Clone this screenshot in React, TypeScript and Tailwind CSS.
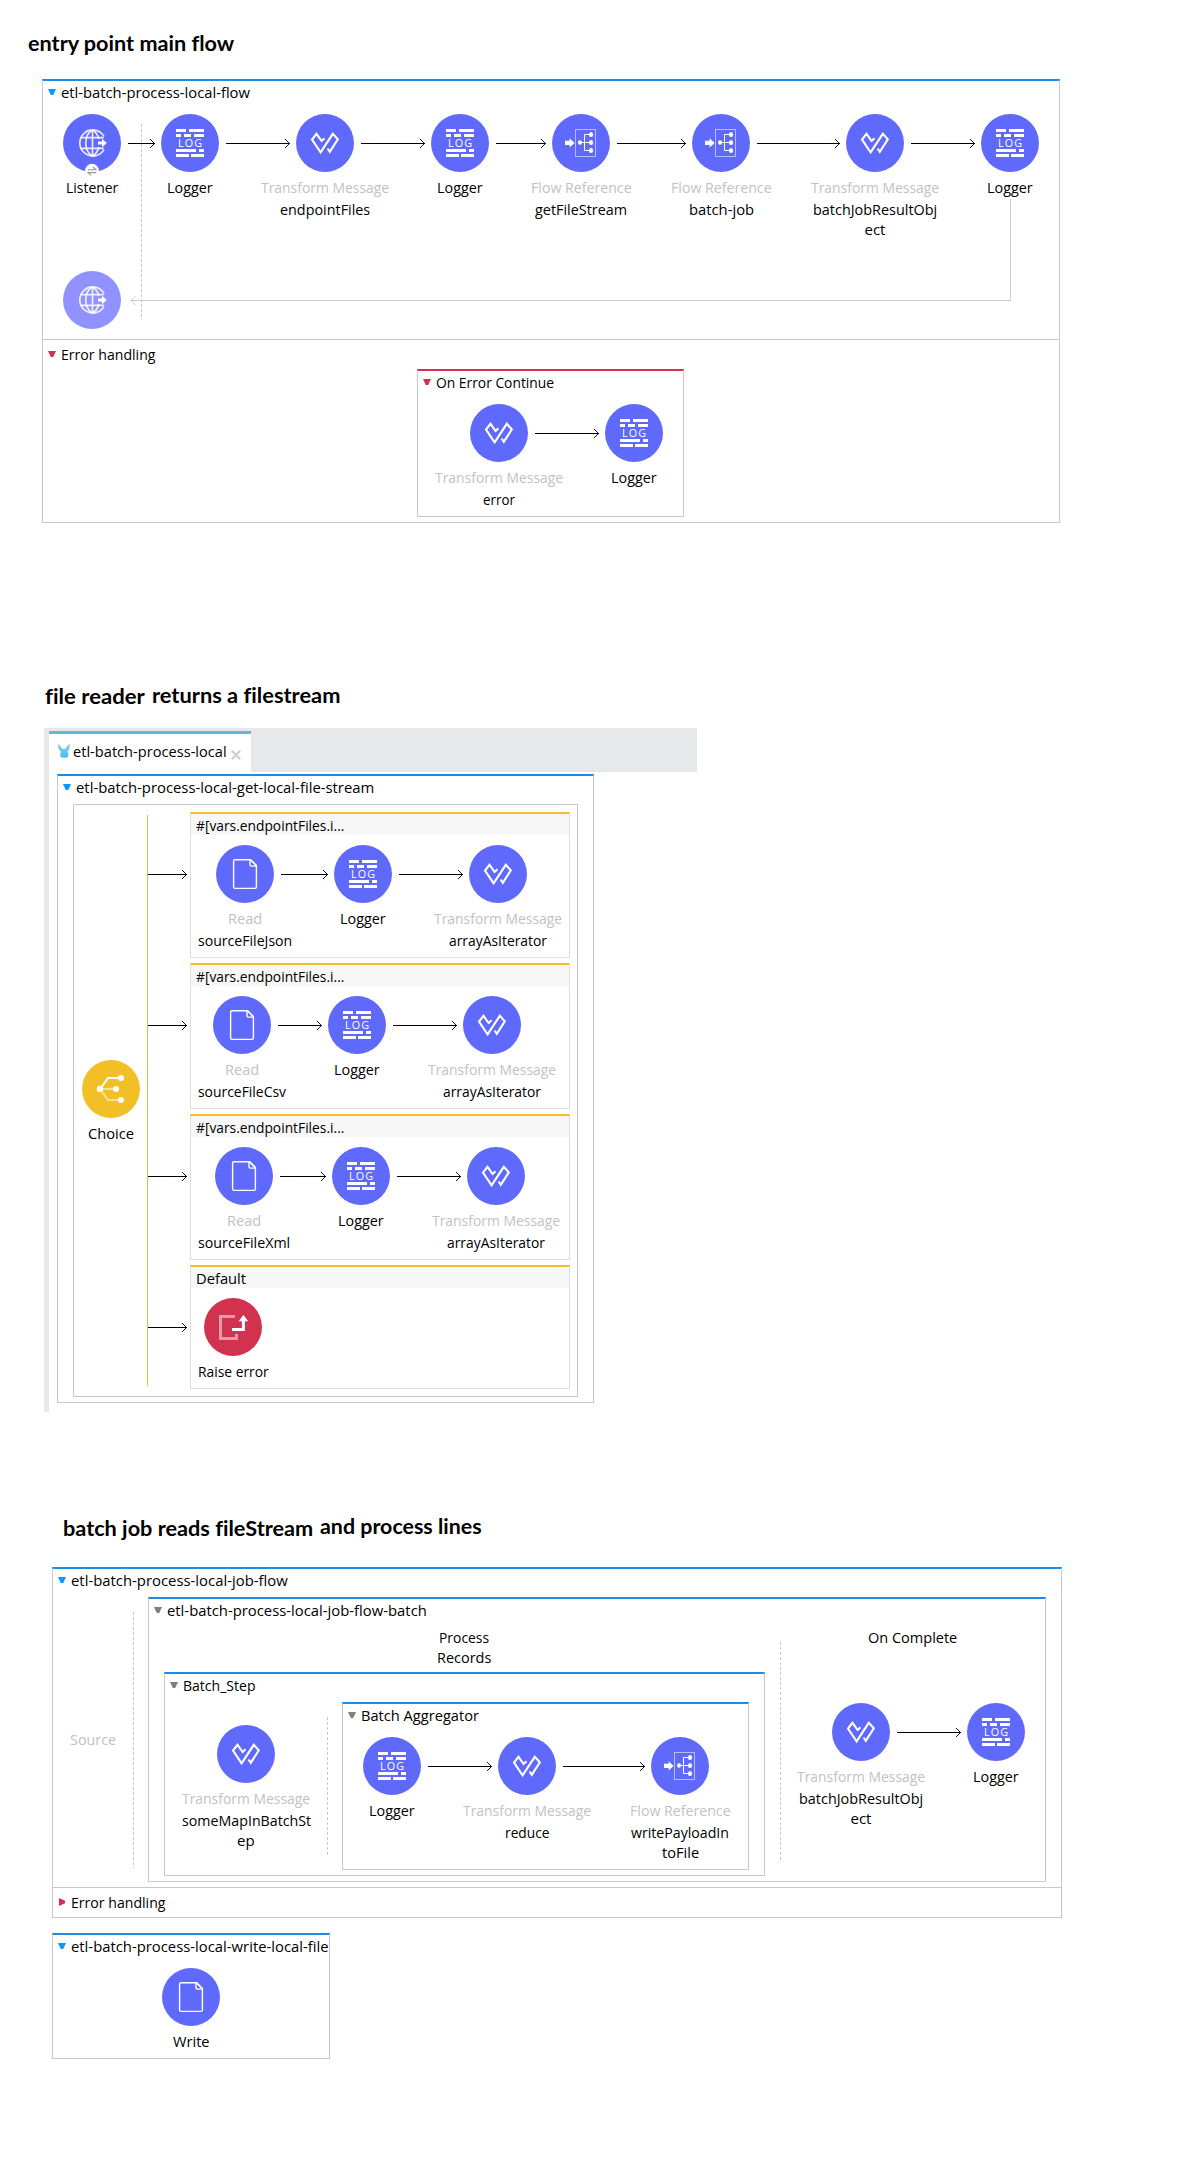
import { useLayoutEffect, useRef, useState, type ReactNode } from "react";

type IconKind = "listener" | "logger" | "transform" | "flowref" | "file" | "choice" | "raise";

/** Single line of text condensed or stretched horizontally to a given width. */
function Fit({ w, children, className = "" }: { w: number; children: string; className?: string }) {
  const ref = useRef<HTMLSpanElement>(null);
  const [scale, setScale] = useState(1);
  useLayoutEffect(() => {
    if (ref.current) setScale(w / ref.current.offsetWidth);
  }, [w, children]);
  return (
    <span className={`block shrink-0 whitespace-nowrap ${className}`} style={{ width: w }}>
      <span ref={ref} className="inline-block origin-left" style={{ transform: `scaleX(${scale})` }}>
        {children}
      </span>
    </span>
  );
}

function Glyph({ kind }: { kind: IconKind }) {
  switch (kind) {
    case "logger":
      return (
        <g fill="#fff">
          <path d="M15 15h10v3H15zM28 15h15v3H28zM15 20h5v3h-5zM23 20h7v3h-7zM33 20h10v3H33zM15 35h20v3H15zM38 35h5v3h-5zM15 40h13v3H15zM30 40h13v3H30z" />
          <text x="17" y="33" fontSize="10.8" fontFamily="'Open Sans', sans-serif" textLength="24" lengthAdjust="spacing">
            LOG
          </text>
        </g>
      );
    case "transform":
      return (
        <path
          d="M28.5 24.2 25.6 27 20.5 19.8 16 25.6 24.6 38.4 36.8 19.8 41.8 25.400 33.800 37.800 31.600 34.500"
          fill="none"
          stroke="#fff"
          strokeWidth="2.1"
        />
      );
    case "flowref":
      return (
        <g fill="#fff">
          <path d="M13 26.8h4.6v-2.6l5 4.7-5 4.7v-2.6H13z" />
          <rect x="23.5" y="15.5" width="20" height="27" fill="none" stroke="#fff" strokeOpacity=".55" />
          <path d="M28 28.5h11M39 20.5h-6.5v16H39" fill="none" stroke="#fff" />
          <ellipse cx="28" cy="28.5" rx="2" ry="2.2" />
          <ellipse cx="39" cy="20.5" rx="2.1" ry="2.5" />
          <ellipse cx="39" cy="28.5" rx="2.1" ry="2.5" />
          <ellipse cx="39" cy="36.5" rx="2.1" ry="2.5" />
        </g>
      );
    case "file":
      return (
        <g fill="none" stroke="#fff" strokeWidth="1.4">
          <path d="M19 14.7h15.6l5.8 5.8V42a1.4 1.4 0 0 1-1.4 1.4H19A1.4 1.4 0 0 1 17.6 42V16.1a1.4 1.4 0 0 1 1.4-1.4z" />
          <path d="M34 14.8v5a1.3 1.3 0 0 0 1.3 1.3h5M34.4 14.8l6 6" />
        </g>
      );
    case "listener":
      return (
        <g>
          <g fill="none" stroke="#fff" strokeWidth="1.7" strokeOpacity=".85">
            <path d="M41 22.4A13 13 0 1 0 41 35.6" />
            <path d="M29.5 16v26M18.2 23.7h22.6M18.2 34.3h22.6" />
            <path d="M29.5 16c-9 5-9 21 0 26M29.5 16c3.6 2.2 5.6 5.4 6.3 9M29.5 42c3.6-2.2 5.600-5.400 6.300-9" />
          </g>
          <path d="M35 27.500h4v-2.800l4.800 4.300-4.800 4.300v-2.800h-4z" fill="#fff" />
        </g>
      );
    case "choice":
      return (
        <g>
          <path d="M20 26.5 26 18h12" fill="none" stroke="#fff" strokeWidth="2" />
          <path d="M20 31.5 26 40h12M20 29h13" fill="none" stroke="#fff" strokeWidth="2" strokeOpacity=".55" />
          <g fill="#fff">
            <circle cx="18" cy="29" r="3.3" />
            <circle cx="39" cy="18" r="3" />
            <circle cx="34" cy="29" r="3" />
            <circle cx="39" cy="40" r="3" />
          </g>
        </g>
      );
    case "raise":
      return (
        <g>
          <path d="M31 18.5H16.5v22h16V36" fill="none" stroke="#fff" strokeOpacity=".5" strokeWidth="3" />
          <path d="M28 31.4h11.4V22" fill="none" stroke="#fff" strokeWidth="3" />
          <path d="M39.4 17l4.8 6.2h-9.6z" fill="#fff" />
        </g>
      );
  }
}

type Line = [string, number];

function Node({
  kind,
  fill = "#5f69fb",
  type,
  name = [],
  children,
}: {
  kind: IconKind;
  fill?: string;
  type?: Line;
  name?: Line[];
  children?: ReactNode;
}) {
  return (
    <div className="relative flex w-[58px] shrink-0 flex-col items-center leading-5">
      <svg width="58" height="58" viewBox="0 0 58 58" className="shrink-0">
        <circle cx="29" cy="29" r="29" fill={fill} />
        <Glyph kind={kind} />
      </svg>
      {children}
      <div className="mt-[5px] flex flex-col items-center">
        {type && (
          <Fit w={type[1]} className="mb-0.5 text-[#c2c2c2]">
            {type[0]}
          </Fit>
        )}
        {name.map(([t, w]) => (
          <Fit key={t} w={w}>
            {t}
          </Fit>
        ))}
      </div>
    </div>
  );
}

/** Connector: a 1px line that fills its box, ending in an open head. */
function Arrow({ className }: { className: string }) {
  return (
    <div className={`flex h-[13px] shrink-0 items-center ${className}`}>
      <div className="h-px grow bg-black" />
      <svg width="6" height="13" viewBox="0 0 6 13" className="-ml-1.5 shrink-0">
        <path d="M1 2 5.5 6.5 1 11" fill="none" stroke="#000" strokeWidth=".9" />
      </svg>
    </div>
  );
}

function Link({ w }: { w: string }) {
  return (
    <div className={`flex shrink-0 pt-[23px] pr-1.5 pl-[7px] ${w}`}>
      <Arrow className="grow" />
    </div>
  );
}

const Logger = () => <Node kind="logger" name={[["Logger", 46]]} />;
const Transform = ({ name }: { name: Line[] }) => <Node kind="transform" type={["Transform Message", 128]} name={name} />;
const FlowRef = ({ name }: { name: Line[] }) => <Node kind="flowref" type={["Flow Reference", 101]} name={name} />;

function Title({ text, w, color, className = "h-[33px] pt-px" }: { text: string; w: number; color: string; className?: string }) {
  return (
    <div className={`flex shrink-0 pl-[5px] leading-5 ${className}`}>
      <svg width="8" height="6" viewBox="0 0 8 6" className="mt-[7px] mr-[5px] shrink-0">
        <path d="M0 0h8L5.2 6H2.8z" fill={color} />
      </svg>
      <Fit w={w}>{text}</Fit>
    </div>
  );
}

const BOX = "flex shrink-0 flex-col border border-t-2 border-[#c9c9c9]";
const DASH = "w-px shrink-0 bg-[repeating-linear-gradient(to_bottom,#c9c9c9_0_3px,transparent_3px_5px)]";
const BLUE = "#0a97ff";
const RED = "#d1334f";
const GRAY = "#7f7f7f";

function Branch({ title, w, children, className }: { title: string; w: number; children: ReactNode; className: string }) {
  return (
    <div className="flex">
      <Arrow className="mt-14 mr-[3px] w-[39px]" />
      <div className={`flex w-[380px] flex-col border border-t-2 border-[#dedede] border-t-[#f2bf26] ${className}`}>
        <div className="mb-2.5 h-[21px] shrink-0 bg-[#f7f7f7] pt-px pl-[5px] leading-5">
          <Fit w={w}>{title}</Fit>
        </div>
        {children}
      </div>
    </div>
  );
}

function MainFlow() {
  return (
    <section className={`${BOX} relative mt-6 ml-[42px] h-[444px] w-[1018px] border-t-[#1b8ce9]`}>
      <Title text="etl-batch-process-local-flow" w={189} color={BLUE} />
      <div className="flex h-[157px] pl-5">
        <Node kind="listener" name={[["Listener", 52]]}>
          <svg width="16" height="16" viewBox="0 0 16 16" className="absolute top-[49px] left-[21px]">
            <circle cx="8" cy="8" r="7.2" fill="#fff" />
            <path d="M4 6.8h8L9 4M12 9.6H4l3 2.8" fill="none" stroke="#999" strokeWidth="1.1" />
          </svg>
        </Node>
        <Link w="w-[40px]" />
        <Logger />
        <Link w="w-[77px]" />
        <Transform name={[["endpointFiles", 90]]} />
        <Link w="w-[77px]" />
        <Logger />
        <Link w="w-[63px]" />
        <FlowRef name={[["getFileStream", 92]]} />
        <Link w="w-[82px]" />
        <FlowRef name={[["batch-job", 65]]} />
        <Link w="w-[96px]" />
        <Transform name={[["batchJobResultObj", 124], ["ect", 21]]} />
        <Link w="w-[77px]" />
        <Logger />
      </div>
      <div className="flex h-[68px] pl-5">
        <Node kind="listener" fill="#9191ff" />
      </div>
      <div className={`absolute top-[43px] left-[98px] h-[196px] ${DASH}`} />
      <div className="absolute top-[118px] left-[87px] h-[102px] w-[881px] border-r border-b border-[#cccccc]" />
      <svg width="6" height="11" viewBox="0 0 6 11" className="absolute top-[214px] left-[87px]">
        <path d="M5.5 1 1 5.5 5.5 10" fill="none" stroke="#cccccc" />
      </svg>
      <div className="flex flex-col border-t border-[#c9c9c9]">
        <Title text="Error handling" w={94} color={RED} className="h-[29px] pt-1" />
        <div className={`${BOX} ml-[374px] h-[148px] w-[267px] border-t-[#d1334f]`}>
          <Title text="On Error Continue" w={118} color={RED} />
          <div className="flex pl-[52px]">
            <Transform name={[["error", 32]]} />
            <Link w="w-[77px]" />
            <Logger />
          </div>
        </div>
      </div>
    </section>
  );
}

function FileReader() {
  const rows: { link: string; pad: string; name: Line }[] = [
    { link: "w-[60px]", pad: "pl-[25px]", name: ["sourceFileJson", 94] },
    { link: "w-[57px]", pad: "pl-[22px]", name: ["sourceFileCsv", 88] },
    { link: "w-[59px]", pad: "pl-[24px]", name: ["sourceFileXml", 92] },
  ];
  return (
    <section className="ml-[44px] w-[653px]">
      <div className="flex h-11 bg-[#e7e8ea] pt-[3px] pl-[5px]">
        <div className="flex w-[202px] border-t-3 border-[#66b5de] bg-white pl-2">
          <svg width="14" height="16" viewBox="0 0 14 16" className="mt-[9px] mr-[2px] shrink-0">
            <defs>
              <linearGradient id="mule" x1="0" y1="0" x2="0" y2="1">
                <stop offset="0" stopColor="#8ccfe9" />
                <stop offset="1" stopColor="#41bdf5" />
              </linearGradient>
            </defs>
            <path d="M1 1c2 1 3 3 4.200 4.800h3.200C9.600 3.600 10.600 2 12.600 1c.5 3-.3 6-2 7.600.9 2 1 3.400.4 5.400-2 1.100-5.400 1.100-7.400 0-.7-2-.5-3.400.4-5.400C1.500 7 .7 4 1 1z" fill="url(#mule)" />
          </svg>
          <Fit w={154} className="mt-[7px] leading-5">
            etl-batch-process-local
          </Fit>
          <svg width="10" height="10" viewBox="0 0 10 10" className="mt-[16px] ml-1">
            <path d="M.8.8l8.400 8.400M9.200.8L.8 9.200" stroke="#cfcfcf" strokeWidth="2.200" />
          </svg>
        </div>
      </div>
      <div className="h-[640px] border-l-5 border-[#e7e8ea] pt-0.5 pl-2">
        <div className={`${BOX} h-[629px] w-[537px] border-t-[#1b8ce9]`}>
          <Title text="etl-batch-process-local-get-local-file-stream" w={298} color={BLUE} className="h-7 pt-px" />
          <div className="ml-[15px] flex h-[593px] w-[505px] border border-[#c9c9c9]">
            <div className="w-[73px] pt-[255px] pl-2">
              <Node kind="choice" fill="#f2bf26" name={[["Choice", 46]]} />
            </div>
            <div className="mt-2.5 h-[571px] w-px bg-[#f2bf26]" />
            <div className="flex flex-col gap-[5px] pt-[7px]">
              {rows.map((r) => (
                <Branch key={r.name[0]} title="#[vars.endpointFiles.i..." w={148} className="h-[146px]">
                  <div className={`flex ${r.pad}`}>
                    <Node kind="file" type={["Read", 34]} name={[r.name]} />
                    <Link w={r.link} />
                    <Logger />
                    <Link w="w-[77px]" />
                    <Transform name={[["arrayAsIterator", 98]]} />
                  </div>
                </Branch>
              ))}
              <Branch title="Default" w={50} className="h-[124px]">
                <div className="flex pl-[13px]">
                  <Node kind="raise" fill="#d1334f" name={[["Raise error", 71]]} />
                </div>
              </Branch>
            </div>
          </div>
        </div>
      </div>
    </section>
  );
}

function BatchJob() {
  return (
    <section className={`${BOX} ml-[52px] h-[351px] w-[1010px] border-t-[#1b8ce9]`}>
      <Title text="etl-batch-process-local-job-flow" w={217} color={BLUE} className="h-7 pt-px" />
      <div className="flex h-[290px] shrink-0">
        <div className="w-20 pt-[132px] pl-[17px] leading-5 text-[#c2c2c2]">
          <Fit w={46}>Source</Fit>
        </div>
        <div className={`mt-[15px] mr-3.5 h-64 ${DASH}`} />
        <div className={`${BOX} h-[285px] w-[898px] border-t-[#1b8ce9]`}>
          <Title text="etl-batch-process-local-job-flow-batch" w={260} color={GRAY} className="h-7 pt-px" />
          <div className="flex">
            <div className="flex w-[631px] flex-col leading-5">
              <div className="mb-[5px] flex flex-col items-center pr-px">
                <Fit w={50}>Process</Fit>
                <Fit w={54}>Records</Fit>
              </div>
              <div className={`${BOX} ml-[15px] h-[204px] w-[601px] border-t-[#1b8ce9]`}>
                <Title text="Batch_Step" w={73} color={GRAY} className="h-7 pt-px" />
                <div className="flex">
                  <div className="w-[162px] pt-[23px] pl-[52px]">
                    <Transform name={[["someMapInBatchSt", 129], ["ep", 18]]} />
                  </div>
                  <div className={`mt-[15px] mr-3.5 h-[139px] ${DASH}`} />
                  <div className={`${BOX} h-[168px] w-[407px] border-t-[#1b8ce9]`}>
                    <Title text="Batch Aggregator" w={118} color={GRAY} />
                    <div className="flex pl-5">
                      <Logger />
                      <Link w="w-[77px]" />
                      <Transform name={[["reduce", 45]]} />
                      <Link w="w-[95px]" />
                      <FlowRef name={[["writePayloadIn", 98], ["toFile", 37]]} />
                    </div>
                  </div>
                </div>
              </div>
            </div>
            <div className={`mt-[15px] h-[220px] ${DASH}`} />
            <div className="flex flex-col leading-5">
              <Fit w={89} className="mb-14 ml-[87px]">
                On Complete
              </Fit>
              <div className="flex pl-[51px]">
                <Transform name={[["batchJobResultObj", 124], ["ect", 21]]} />
                <Link w="w-[77px]" />
                <Logger />
              </div>
            </div>
          </div>
        </div>
      </div>
      <div className="flex border-t border-[#c9c9c9] pt-1 pl-1.5 leading-5">
        <svg width="6" height="8" viewBox="0 0 6 8" className="mt-1.5 mr-[6px]">
          <path d="M0 0l6 2.800v2.400L0 8z" fill={RED} />
        </svg>
        <Fit w={94}>Error handling</Fit>
      </div>
    </section>
  );
}

const HEADING = "flex font-['Lato',sans-serif] text-[21px] leading-6 font-bold";

export default function App() {
  return (
    <main className="flex h-[2180px] w-[1192px] flex-col overflow-hidden bg-white pt-[31px] font-['Open_Sans','Noto_Sans',sans-serif] text-[15px] text-black [font-variant-ligatures:none]">
      <h1 className={`${HEADING} ml-7`}>
        <Fit w={206}>entry point main flow</Fit>
      </h1>
      <MainFlow />
      <h2 className={`${HEADING} mt-40 mb-5 ml-[45px] gap-[7px]`}>
        <Fit w={100} className="pt-px">
          file reader
        </Fit>
        <Fit w={188}>returns a filestream</Fit>
      </h2>
      <FileReader />
      <h2 className={`${HEADING} mt-[102px] mb-[27px] ml-[63px] gap-[7px]`}>
        <Fit w={250} className="pt-0.5">
          batch job reads fileStream
        </Fit>
        <Fit w={162}>and process lines</Fit>
      </h2>
      <BatchJob />
      <section className={`${BOX} mt-[15px] ml-[52px] h-[126px] w-[278px] border-t-[#1b8ce9]`}>
        <Title text="etl-batch-process-local-write-local-file" w={258} color={BLUE} />
        <div className="flex pl-[109px]">
          <Node kind="file" name={[["Write", 37]]} />
        </div>
      </section>
    </main>
  );
}
